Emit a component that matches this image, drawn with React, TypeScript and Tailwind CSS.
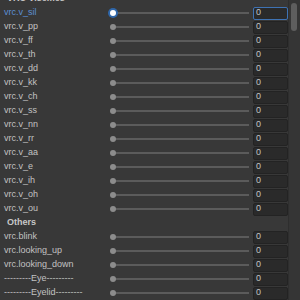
import React from 'react'

const visemes = ['sil', 'pp', 'ff', 'th', 'dd', 'kk', 'ch', 'ss', 'nn', 'rr', 'aa', 'e', 'ih', 'oh', 'ou']
const others = ['vrc.blink', 'vrc.looking_up', 'vrc.looking_down', '---------Eye---------', '---------Eyelid---------']

function Row({ label, active = false }: { label: string; active?: boolean }) {
  return (
    <div className="flex items-center h-[14px] shrink-0">
      <div className={`w-[110px] pl-[4px] truncate ${active ? 'text-[#5b8fd4]' : 'text-[#c2c2c2]'}`}>{label}</div>
      <div className="relative flex items-center w-[139px] h-full">
        <div className="ml-[3px] h-[2px] flex-1 bg-[#5b5b5b]" />
        {active ? (
          <div className="absolute left-[-2px] top-[2px] w-[10px] h-[10px] rounded-full bg-[#2f66a8] flex items-center justify-center">
            <div className="w-[6px] h-[6px] rounded-full bg-white" />
          </div>
        ) : (
          <div className="absolute left-0 top-[4px] w-[6px] h-[6px] rounded-full bg-[#8c8c8c]" />
        )}
      </div>
      <div
        className={`ml-[4px] w-[35px] h-[13px] rounded-[2px] bg-[#2a2a2a] border flex items-center pl-[2px] text-[#c4c4c4] ${
          active ? 'border-[#3e72b3]' : 'border-[#232323]'
        }`}
      >
        0
      </div>
    </div>
  )
}

export default function App() {
  return (
    <div className="w-[300px] h-[300px] overflow-hidden bg-[#383838] flex text-[9px] font-['Liberation_Sans',sans-serif]">
      <div className="w-[288px] flex flex-col mt-[-8px]">
        <div className="h-[14px] flex items-center pl-[7px] font-bold text-[#c8c8c8]">VRC Visemes</div>
        {visemes.map((v, i) => (
          <Row key={v} label={`vrc.v_${v}`} active={i === 0} />
        ))}
        <div className="h-[14px] shrink-0 flex items-center pl-[7px] font-bold text-[#c8c8c8]">Others</div>
        {others.map((o) => (
          <Row key={o} label={o} />
        ))}
      </div>
      <div className="w-[12px] h-full bg-[#353535] border-l border-[#2e2e2e] pt-[3px] pl-[2px]">
        <div className="w-[6px] h-[28px] rounded-full bg-[#5e5e5e]" />
      </div>
    </div>
  )
}
